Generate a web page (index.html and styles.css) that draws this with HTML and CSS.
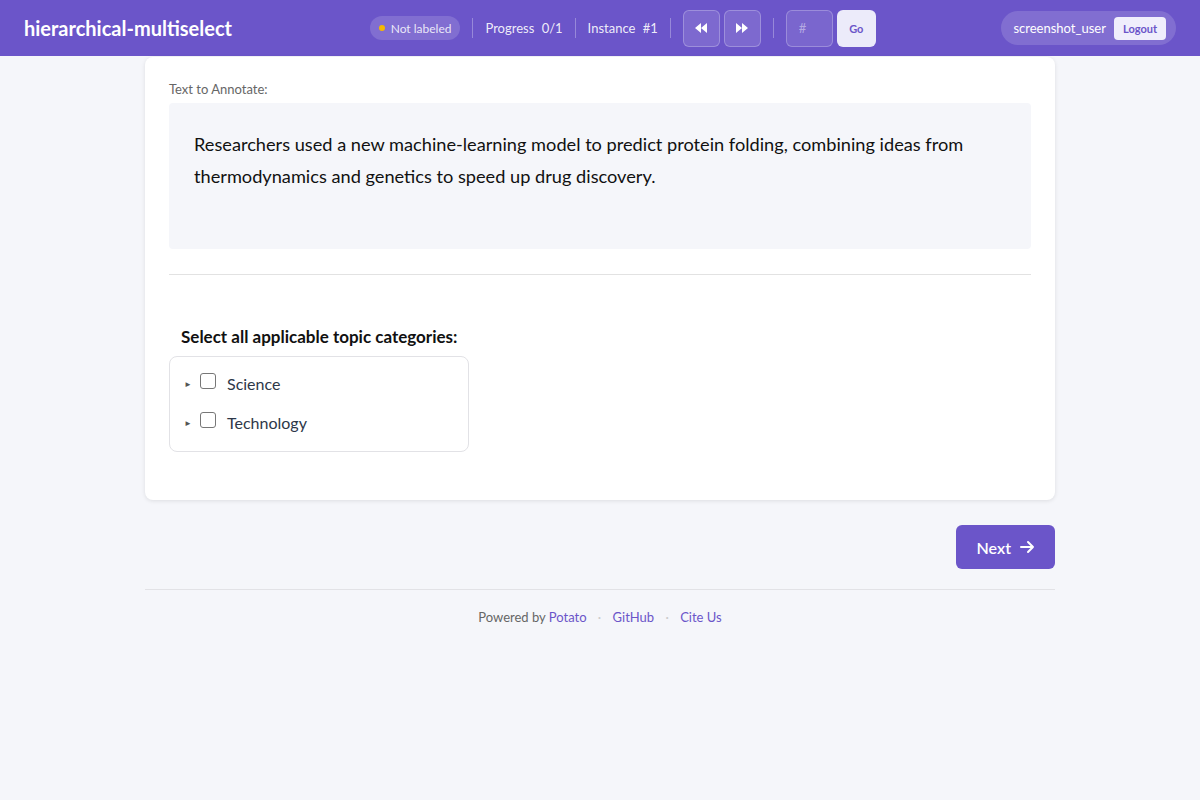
FILE: index.html
```html
<!DOCTYPE html>
<html lang="en">
<head>
  <meta charset="UTF-8" />
  <meta name="viewport" content="width=device-width, initial-scale=1" />
  <title>hierarchical-multiselect</title>
  <link rel="stylesheet" href="styles.css">
</head>
<body>
  <header class="topbar">
    <div class="brand">hierarchical-multiselect</div>
    <div class="nav-center">
      <span class="status-pill"><span class="dot"></span>Not labeled</span>
      <span class="sep"></span>
      <span class="meta">Progress <span class="num">0/1</span></span>
      <span class="sep"></span>
      <span class="meta">Instance <span class="num">#1</span></span>
      <span class="sep"></span>
      <button class="nav-btn" aria-label="Previous">
        <svg width="14" height="12" viewBox="0 0 14 12"><path d="M7 1 L1 6 L7 11 Z M13 1 L7 6 L13 11 Z" fill="#fff"/></svg>
      </button>
      <button class="nav-btn" aria-label="Next">
        <svg width="14" height="12" viewBox="0 0 14 12"><path d="M1 1 L7 6 L1 11 Z M7 1 L13 6 L7 11 Z" fill="#fff"/></svg>
      </button>
      <span class="sep"></span>
      <input class="jump-input" type="text" placeholder="#">
      <button class="go-btn">Go</button>
    </div>
    <div class="user-pill">
      <span class="username">screenshot_user</span>
      <button class="logout-btn">Logout</button>
    </div>
  </header>

  <main class="page">
    <section class="card">
      <div class="label">Text to Annotate:</div>
      <div class="text-box">
        Researchers used a new machine-learning model to predict protein folding, combining ideas from thermodynamics and genetics to speed up drug discovery.
      </div>
      <hr class="divider">
      <div class="question">
        <h3>Select all applicable topic categories:</h3>
        <div class="tree">
          <div class="tree-row">
            <span class="caret">&#9658;</span>
            <span class="checkbox"></span>
            <span class="tree-label">Science</span>
          </div>
          <div class="tree-row">
            <span class="caret">&#9658;</span>
            <span class="checkbox"></span>
            <span class="tree-label">Technology</span>
          </div>
        </div>
      </div>
    </section>

    <div class="actions">
      <button class="next-btn">Next
        <svg width="16" height="16" viewBox="0 0 16 16"><path d="M2 8 H14 M9 3 L14 8 L9 13" stroke="#fff" stroke-width="2" fill="none" stroke-linecap="round" stroke-linejoin="round"/></svg>
      </button>
    </div>

    <footer class="footer">
      <span class="muted">Powered by</span> <a href="#">Potato</a>
      <span class="dotsep">·</span>
      <a href="#">GitHub</a>
      <span class="dotsep">·</span>
      <a href="#">Cite Us</a>
    </footer>
  </main>
</body>
</html>
```

FILE: styles.css
```css
body {
  margin: 0;
  font-family: "Lato", "Noto Sans", sans-serif;
  background: #f5f6fa;
  color: #1a1a1a;
}
button {
  font-family: inherit;
  cursor: pointer;
}
.topbar {
  height: 56px;
  background: #6b55c9;
  display: flex;
  align-items: center;
  justify-content: space-between;
  padding: 0 24px;
  box-sizing: border-box;
  color: #fff;
}
.brand {
  font-size: 20px;
  font-weight: 700;
  width: 220px;
}
.nav-center {
  display: flex;
  align-items: center;
  gap: 12px;
}
.status-pill {
  display: inline-flex;
  align-items: center;
  gap: 6px;
  height: 24px;
  padding: 0 9px;
  border-radius: 12px;
  background: rgba(255,255,255,0.15);
  font-size: 12px;
  color: rgba(255,255,255,0.85);
}
.dot {
  width: 6px;
  height: 6px;
  border-radius: 50%;
  background: #f5b800;
}
.sep {
  width: 1px;
  height: 20px;
  background: rgba(255,255,255,0.3);
}
.meta {
  font-size: 13px;
  color: rgba(255,255,255,0.9);
}
.meta .num {
  margin-left: 4px;
}
.nav-btn {
  width: 37px;
  height: 37px;
  border-radius: 6px;
  background: rgba(255,255,255,0.12);
  border: 1px solid rgba(255,255,255,0.25);
  display: flex;
  align-items: center;
  justify-content: center;
  padding: 0;
}
.nav-btn + .nav-btn {
  margin-left: -8px;
}
.jump-input {
  width: 47px;
  height: 37px;
  box-sizing: border-box;
  border-radius: 6px;
  background: rgba(255,255,255,0.1);
  border: 1px solid rgba(255,255,255,0.25);
  color: #fff;
  padding: 0 12px;
  font-size: 13px;
  font-family: inherit;
}
.jump-input::placeholder {
  color: rgba(255,255,255,0.45);
}
.go-btn {
  width: 39px;
  height: 37px;
  margin-left: -8px;
  border: none;
  border-radius: 6px;
  background: #ecebfa;
  color: #6b55c9;
  font-size: 11px;
  font-weight: 700;
}
.user-pill {
  display: flex;
  align-items: center;
  gap: 8px;
  height: 34px;
  padding: 0 10px 0 12px;
  border-radius: 17px;
  background: rgba(255,255,255,0.15);
}
.username {
  font-size: 13px;
}
.logout-btn {
  height: 23px;
  padding: 0 9px;
  border: none;
  border-radius: 4px;
  background: #f0eefc;
  color: #6b55c9;
  font-size: 11px;
  font-weight: 700;
}
.page {
  width: 910px;
  margin: 0 auto;
}
.card {
  background: #fff;
  border-radius: 8px;
  box-shadow: 0 1px 4px rgba(0,0,0,0.1);
  padding: 24px 24px 48px;
  margin-top: 1px;
}
.label {
  font-size: 13px;
  color: #666;
  margin-bottom: 6px;
}
.text-box {
  background: #f5f6fa;
  border-radius: 4px;
  padding: 25px 25px 0;
  height: 146px;
  box-sizing: border-box;
  font-size: 18.2px;
  line-height: 32px;
  color: #111;
}
.divider {
  border: none;
  border-top: 1px solid #e2e2e2;
  margin: 25px 0 0;
}
.question {
  padding-top: 51px;
}
.question h3 {
  margin: 0 0 9px 12px;
  font-size: 17px;
  font-weight: 700;
  color: #111;
}
.tree {
  width: 300px;
  box-sizing: border-box;
  border: 1px solid #e2e2e6;
  border-radius: 8px;
  padding: 7px 14px 9px;
}
.tree-row {
  display: flex;
  align-items: center;
  height: 39px;
}
.caret {
  font-size: 8px;
  color: #555;
  width: 16px;
}
.checkbox {
  width: 14px;
  height: 14px;
  border: 1px solid #777;
  border-radius: 3px;
  margin-top: -5px;
}
.tree-label {
  margin-left: 11px;
  font-size: 16px;
  color: #2d3748;
}
.actions {
  display: flex;
  justify-content: flex-end;
  margin-top: 25px;
  padding-bottom: 20px;
  border-bottom: 1px solid #e2e2e6;
}
.next-btn {
  height: 44px;
  padding: 0 20px 0 21px;
  border: none;
  border-radius: 6px;
  background: #6b55c9;
  color: #fff;
  font-size: 16px;
  font-weight: 600;
  display: flex;
  align-items: center;
  gap: 8px;
}
.footer {
  text-align: center;
  font-size: 13px;
  padding-top: 19px;
}
.footer .muted {
  color: #666;
}
.footer a {
  color: #6b55c9;
  text-decoration: none;
}
.dotsep {
  color: #ccc;
  margin: 0 8px;
}
```
